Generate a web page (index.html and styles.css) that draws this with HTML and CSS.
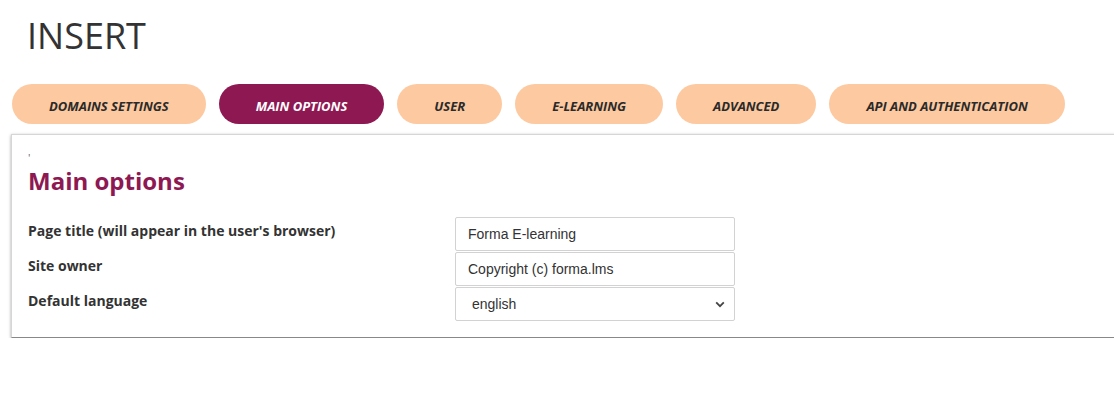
FILE: index.html
```html
<!DOCTYPE html>
<html lang="en">
<head>
<meta charset="utf-8">
<title>Insert</title>
<link rel="stylesheet" href="styles.css">
</head>
<body>
<h1 class="page-title">INSERT</h1>
<nav class="tabs">
  <a class="tab">DOMAINS SETTINGS</a>
  <a class="tab tab-active">MAIN OPTIONS</a>
  <a class="tab">USER</a>
  <a class="tab">E-LEARNING</a>
  <a class="tab">ADVANCED</a>
  <a class="tab">API AND AUTHENTICATION</a>
</nav>
<section class="panel">
  <div class="tick">'</div>
  <h2 class="section-title">Main options</h2>
  <div class="form">
    <label class="form-label">Page title (will appear in the user's browser)</label>
    <input class="form-input" type="text" value="Forma E-learning">
    <label class="form-label">Site owner</label>
    <input class="form-input" type="text" value="Copyright (c) forma.lms">
    <label class="form-label">Default language</label>
    <div class="select">
      <span class="select-value">english</span>
      <svg class="select-arrow" width="10" height="7" viewBox="0 0 10 7"><path d="M1.2 1.4 L5 5.2 L8.8 1.4" fill="none" stroke="#444" stroke-width="1.8"/></svg>
    </div>
  </div>
</section>
</body>
</html>
```
FILE: styles.css
```css
html, body {
  margin: 0;
  padding: 0;
  overflow: hidden;
  background: #fff;
}
body {
  font-family: "Open Sans", "Liberation Sans", sans-serif;
  color: #333;
}
.page-title {
  margin: 0;
  padding: 12px 0 0 27px;
  font-size: 36px;
  font-weight: 400;
  line-height: 48px;
  color: #333;
}
.tabs {
  display: flex;
  gap: 13px;
  padding: 24px 0 0 12px;
}
.tab {
  display: flex;
  align-items: center;
  justify-content: center;
  height: 40px;
  padding: 4px 37px 0;
  border-radius: 20px;
  background: #fdc9a0;
  color: #2a2a2a;
  font-size: 13px;
  font-weight: 700;
  font-style: italic;
  white-space: nowrap;
  box-sizing: border-box;
}
.tab-active {
  background: #8e1852;
  color: #fff;
}
.panel {
  margin: 10px -40px 0 11px;
  border: 1px solid #d6d6d6;
  border-bottom-color: #888;
  box-shadow: 0 1px 3px rgba(0,0,0,0.35);
  padding: 18px 0 16px 16px;
}
.tick {
  font-size: 11px;
  line-height: 10px;
  height: 10px;
  color: #666;
}
.section-title {
  margin: 2px 0 0 0;
  font-size: 24px;
  line-height: 32px;
  font-weight: 700;
  color: #8e1852;
}
.form {
  display: grid;
  grid-template-columns: 427px 280px;
  row-gap: 1px;
  margin-top: 20px;
  align-items: start;
}
.form-label {
  font-size: 14px;
  font-weight: 700;
  color: #333;
  line-height: 18px;
  padding-top: 5px;
}
.form-input, .select {
  box-sizing: border-box;
  height: 34px;
  width: 280px;
  border: 1px solid #d2d2d2;
  border-radius: 2px;
  padding: 0 12px;
  font-family: "Liberation Sans", Arial, sans-serif;
  font-size: 14px;
  color: #333;
  background: #fff;
  outline: none;
  margin: 0;
}
.select {
  display: flex;
  align-items: center;
  justify-content: space-between;
  padding: 0 9px 0 16px;
}
.select-arrow {
  display: block;
}
```
